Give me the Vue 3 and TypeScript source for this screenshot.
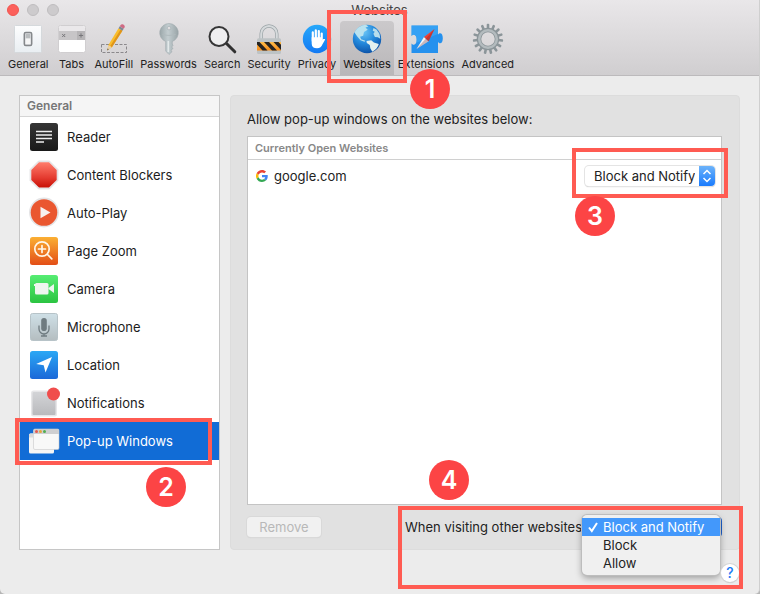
<script setup lang="ts">
import { ref } from 'vue'

type Policy = 'Block and Notify' | 'Block' | 'Allow'

const policies: Policy[] = ['Block and Notify', 'Block', 'Allow']
const tabs = [
  'General', 'Tabs', 'AutoFill', 'Passwords', 'Search',
  'Security', 'Privacy', 'Websites', 'Extensions', 'Advanced',
]
const settings = [
  'Reader', 'Content Blockers', 'Auto-Play', 'Page Zoom', 'Camera',
  'Microphone', 'Location', 'Notifications', 'Pop-up Windows',
]

const activeTab = ref('Websites')
const activeSetting = ref('Pop-up Windows')
const sitePolicy = ref<Policy>('Block and Notify')
const otherPolicy = ref<Policy>('Block and Notify')
const teeth = Array.from({ length: 15 }, (_, i) => i * 24)
</script>

<template>
  <div class="window">
    <header class="toolbar">
      <div class="titlebar">
        <div class="lights">
          <button class="light close" type="button" aria-label="Close"></button>
          <button class="light" type="button" aria-label="Minimize"></button>
          <button class="light" type="button" aria-label="Zoom"></button>
        </div>
        <h1 class="title">{{ activeTab }}</h1>
      </div>
      <nav class="tabs">
        <button
          v-for="tab in tabs"
          :key="tab"
          type="button"
          class="tab"
          :class="{ active: tab === activeTab }"
          @click="activeTab = tab"
        >
          <svg class="tab-icon" viewBox="0 0 32 32" aria-hidden="true">
            <defs>
              <linearGradient id="paper" x1="0" y1="0" x2="0" y2="1">
                <stop offset="0" stop-color="#fdfdfe" /><stop offset="1" stop-color="#e9eef2" />
              </linearGradient>
              <linearGradient id="metal" x1="0" y1="0" x2="1" y2="0">
                <stop offset="0" stop-color="#9aa6a9" /><stop offset=".45" stop-color="#c3cdd0" /><stop offset="1" stop-color="#99a4a7" />
              </linearGradient>
              <linearGradient id="azure" x1="0" y1="0" x2="0" y2="1">
                <stop offset="0" stop-color="#27a8fa" /><stop offset="1" stop-color="#1479f3" />
              </linearGradient>
              <radialGradient id="ocean" cx=".4" cy=".25" r=".8">
                <stop offset="0" stop-color="#69c5f6" /><stop offset=".5" stop-color="#2389dc" /><stop offset="1" stop-color="#0a4da3" />
              </radialGradient>
              <linearGradient id="amber" x1="0" y1="0" x2="0" y2="1">
                <stop offset="0" stop-color="#ffbd4b" /><stop offset="1" stop-color="#f68b18" />
              </linearGradient>
            </defs>
            <g v-if="tab === 'General'">
              <rect x="2.5" y="2.5" width="27" height="27" rx="1" fill="url(#paper)" stroke="#d5d9dc" />
              <rect x="12.300" y="9.500" width="7.400" height="13" rx="1.5" fill="#dfe1e3" stroke="#85888b" stroke-width="1.500" />
              <rect x="13.700" y="11" width="4.600" height="4.500" fill="#babdbf" />
              <rect x="13.700" y="15.500" width="4.600" height="5.500" fill="#f6f6f6" />
            </g>
            <g v-else-if="tab === 'Tabs'">
              <rect x="2.5" y="2.5" width="27" height="27" rx="2" fill="#fff" stroke="#d0ced0" />
              <path d="M3 8V5a2 2 0 0 1 2-2h22a2 2 0 0 1 2 2v3z" fill="#eae8ea" />
              <path d="M3 8h26v9H3z" fill="#c7c5c7" />
              <path d="M21 8h8v9h-8z" fill="#b6b4b6" />
              <path d="m6.200 11 3 3m0-3-3 3M25 10.400v4.200m-2.100-2.100h4.200" stroke="#77767a" fill="none" />
            </g>
            <g v-else-if="tab === 'AutoFill'">
              <path d="M3.500 21.500h25v8h-25z" fill="none" stroke="#8b898c" stroke-dasharray="3 1.500" />
              <path d="m9.300 27.500 1.100-5.500L20.500 5.200l3.900 2.500-10.500 16.600z" fill="#f9bd2c" />
              <path d="m12.300 23 10.300-16.500 1.800 1.200-10.500 16.600z" fill="#e0951a" />
              <path d="m9.300 27.500 1.100-5.500 3.500 2.300z" fill="#e9cfa4" />
              <path d="m9.300 27.500.4-2 1 .7z" fill="#333" />
              <path d="m20.500 5.200 1.300-2 3.900 2.500-1.300 2z" fill="#7d8a95" />
              <path d="m21.800 3.200.8-1.200c1.500-1.700 5 .4 4 2.300l-.9 1.400z" fill="#cf6b83" />
            </g>
            <g v-else-if="tab === 'Passwords'">
              <path fill-rule="evenodd" d="M16 .5a9.300 9.300 0 0 0-3.300 18V28l3.300 3.500 3-2.800-1-1.500 2-1.700-1.300-1.500 1.300-1.500-.7-1.500v-2.500A9.300 9.300 0 0 0 16 .5zm0 2.800a1.800 1.800 0 1 1 0 3.600 1.800 1.800 0 0 1 0-3.600z" fill="url(#metal)" stroke="#97a3a6" stroke-width=".5" />
              <path d="M15.300 18v11" stroke="#e3e9ea" stroke-width="1.600" />
              <path d="M9.500 11.500c4 1.200 9 1.200 13 0" fill="none" stroke="#b0babd" />
            </g>
            <g v-else-if="tab === 'Search'">
              <path d="m20.500 20.500 8.300 8.300" stroke="#303030" stroke-width="3" stroke-linecap="round" />
              <circle cx="13" cy="13.500" r="9.500" fill="#f4f4f5" fill-opacity=".75" stroke="#353536" stroke-width="2" />
            </g>
            <g v-else-if="tab === 'Security'">
              <path d="M8.200 17v-6.200a7.800 7.800 0 0 1 15.600 0V17" fill="none" stroke="#9ba4a7" stroke-width="3.400" />
              <path d="M8.200 17v-6.200a7.800 7.800 0 0 1 15.600 0V17" fill="none" stroke="#d6dadc" stroke-width="2" />
              <rect x="4" y="15.300" width="24" height="15.700" rx="1.500" fill="#bdc3c5" />
              <path d="M4 19h24v8.500H4z" fill="url(#amber)" />
              <path d="M4 19h2.500l8 8.500h-5L4 21.500zM11 19h5l8 8.500h-5zM20.500 19h5l2.500 2.700V27z" fill="#252321" />
            </g>
            <g v-else-if="tab === 'Privacy'">
              <circle cx="16" cy="16" r="14.200" fill="url(#azure)" />
              <path d="M11.800 18V9.300M14.800 15V7.300M17.800 15V8M20.700 17v-6.500" stroke="#fff" stroke-width="2.200" stroke-linecap="round" />
              <path d="M10.700 14.300v6.500c0 3 2 4.500 5.300 4.500 3 0 4.400-1.600 5.500-4l2.700-4.900c-1.400-.9-2.300-.2-3.300 1l-.9.900v-4z" fill="#fff" />
            </g>
            <g v-else-if="tab === 'Websites'">
              <circle cx="16" cy="16" r="14.200" fill="url(#ocean)" />
              <path d="M3.500 9.500C6.200 4.200 10.500 2 15 1.800l2.400 1.700-2.900 1.100 2.200 2.200-3.700 2.200-.8 3.700-3.100 1.100 1.100 2.500 4 1.500-.7.900-4-1.400-3.400-4z" fill="#b9e2ef" />
              <path d="m15.500 18 4.700-.7 2.700 2.200 4.900 1.500c-.8 3.300-3.200 6.100-6.500 7.800l-2-3.500-.5-3.300-3-1.900z" fill="#e4f1ef" />
              <path d="m22.500 5 3 1.600 3 4.100.8 5-2.500-1.500-2.900-.3-1.500-3.200 1.300-2-2-1z" fill="#b7ddec" />
            </g>
            <g v-else-if="tab === 'Extensions'">
              <path d="M1.500 2.500h26.500v9c.8-.9 1.300-1.200 2-1.200 1.800 0 2.800 1.900 2.800 5s-1 5-2.800 5c-.7 0-1.200-.3-2-1.200V30H1.500V20.500c.8.900 1.500 1.200 2.300 1.200 1.900 0 2.800-2.200 2.800-5s-.9-5-2.800-5c-.8 0-1.500.5-2.300 1.300z" fill="#2591ee" />
              <path d="M1.500 2.500h26.500V11L6 20c1-2.500.8-7-1-8-1.200-.7-2.500-.2-3.500 1z" fill="#45b2f9" opacity=".5" />
              <path d="m6.500 26 7.500-12 4.600 4.200z" fill="#f5f7f9" />
              <path d="M24.500 6 18.600 18.200 14 14z" fill="#f04035" />
              <path d="M24.500 6 6.500 26l12.100-7.800z" fill="#60202e" opacity=".3" />
            </g>
            <g v-else>
              <rect v-for="a in teeth" :key="a" x="14.700" y=".8" width="2.600" height="6" rx="1" fill="#8b9599" :transform="`rotate(${a} 16 16)`" />
              <circle cx="16" cy="16" r="9" fill="none" stroke="#8b9599" stroke-width="4.500" />
              <circle cx="16" cy="16" r="8.800" fill="none" stroke="#b3bbbe" stroke-width="2.500" />
            </g>
          </svg>
          <span>{{ tab }}</span>
        </button>
      </nav>
    </header>

    <main class="body">
      <aside class="sidebar">
        <h2 class="side-head">General</h2>
        <ul class="side-list">
          <li v-for="item in settings" :key="item">
            <button
              type="button"
              class="side-item"
              :class="{ selected: item === activeSetting }"
              @click="activeSetting = item"
            >
              <svg class="side-icon" viewBox="0 0 32 32" aria-hidden="true">
                <defs>
                  <linearGradient id="dark" x1="0" y1="0" x2="0" y2="1"><stop offset="0" stop-color="#353535" /><stop offset="1" stop-color="#191919" /></linearGradient>
                  <linearGradient id="red" x1="0" y1="0" x2="0" y2="1"><stop offset="0" stop-color="#ff7d6c" /><stop offset=".6" stop-color="#e53c31" /><stop offset="1" stop-color="#c80f05" /></linearGradient>
                  <linearGradient id="orange" x1="0" y1="0" x2="0" y2="1"><stop offset="0" stop-color="#fbb033" /><stop offset="1" stop-color="#e34e17" /></linearGradient>
                  <linearGradient id="green" x1="0" y1="0" x2="0" y2="1"><stop offset="0" stop-color="#56ed73" /><stop offset="1" stop-color="#2bc441" /></linearGradient>
                  <linearGradient id="steel" x1="0" y1="0" x2="0" y2="1"><stop offset="0" stop-color="#cfe0e7" /><stop offset="1" stop-color="#b4bdc0" /></linearGradient>
                  <linearGradient id="blue" x1="0" y1="0" x2="0" y2="1"><stop offset="0" stop-color="#2ba8f5" /><stop offset="1" stop-color="#1b68d8" /></linearGradient>
                  <linearGradient id="gray" x1="0" y1="0" x2="0" y2="1"><stop offset="0" stop-color="#d3d4d7" /><stop offset="1" stop-color="#b9babd" /></linearGradient>
                </defs>
                <g v-if="item === 'Reader'">
                  <rect x="2" y="2" width="28" height="28" rx="2.500" fill="url(#dark)" />
                  <path d="M8 10.500h16M8 14h16M8 17.500h16M8 21h8" stroke="#eee" stroke-width="1.700" />
                </g>
                <g v-else-if="item === 'Content Blockers'">
                  <path d="M10.500 2h11L30 10.500v11L21.500 30h-11L2 21.500v-11z" fill="#e9e9eb" stroke="#d8d8da" stroke-width=".6" />
                  <path d="M11 3.200h10l7.700 7.700v10L21 28.600H11l-7.700-7.700v-10z" fill="url(#red)" />
                </g>
                <g v-else-if="item === 'Auto-Play'">
                  <circle cx="16" cy="15.500" r="15" fill="#e4e4e6" />
                  <circle cx="16" cy="15.500" r="13.300" fill="#ea5730" />
                  <path d="M12.500 9.800 22.500 15.500l-10 5.700z" fill="#f7f1ef" />
                </g>
                <g v-else-if="item === 'Page Zoom'">
                  <rect x="2" y="2" width="28" height="28" rx="2.500" fill="url(#orange)" />
                  <g fill="none" stroke="#fff6e8" stroke-width="1.700" stroke-linecap="round"><circle cx="14" cy="14" r="7.200" /><path d="m19.500 19.500 4.300 4.300M14 10.500v7M10.500 14h7" /></g>
                </g>
                <g v-else-if="item === 'Camera'">
                  <rect x="2" y="2" width="28" height="28" rx="2.500" fill="url(#green)" />
                  <rect x="7" y="10" width="13.500" height="11.500" rx="1.500" fill="#eef5ef" />
                  <path d="M6 11h3v2H6zM20.500 15l5.500-4v9l-5.500-4z" fill="#eef5ef" />
                </g>
                <g v-else-if="item === 'Microphone'">
                  <rect x="2.500" y="2.500" width="27" height="27" rx="2" fill="url(#steel)" stroke="#b7c3c8" />
                  <rect x="13.200" y="7" width="5.600" height="13" rx="2.800" fill="#6f7b80" />
                  <path d="M11 14.500v3.500a5 5 0 0 0 10 0v-3.500M16 23v2M13 25h6" fill="none" stroke="#6f7b80" stroke-width="1.300" />
                </g>
                <g v-else-if="item === 'Location'">
                  <rect x="2" y="2" width="28" height="28" rx="2.500" fill="url(#blue)" />
                  <path d="M24 8 17.500 23.500l-1.800-7.200L8.200 15z" fill="#fff" />
                </g>
                <g v-else-if="item === 'Notifications'">
                  <rect x="3" y="3.500" width="26" height="26" rx="2.500" fill="#e6e6e8" />
                  <rect x="4.500" y="5" width="23" height="23" rx="1" fill="url(#gray)" />
                  <circle cx="25.500" cy="7" r="6.500" fill="#f04d4c" />
                </g>
                <g v-else>
                  <rect x="1" y="8.500" width="25" height="20" rx="1.500" fill="#f5f5f5" />
                  <path d="M1 10a1.500 1.500 0 0 1 1.500-1.500H5v4H1z" fill="#dadada" />
                  <rect x="5.500" y="4" width="25.500" height="20.500" rx="1.500" fill="#f8f8f8" stroke="#c9c9cb" stroke-width=".6" />
                  <path d="M5.500 9V5.500A1.500 1.500 0 0 1 7 4h22.500A1.500 1.500 0 0 1 31 5.500V9z" fill="#cfcfd1" />
                  <circle cx="8.500" cy="6.500" r="1.500" fill="#e75a50" /><circle cx="12.500" cy="6.500" r="1.500" fill="#e5a53b" /><circle cx="16.500" cy="6.500" r="1.500" fill="#51ad50" />
                </g>
              </svg>
              <span>{{ item }}</span>
            </button>
          </li>
        </ul>
      </aside>

      <section class="pane">
        <p class="intro">Allow pop-up windows on the websites below:</p>
        <div class="sites">
          <h3 class="sites-head">Currently Open Websites</h3>
          <div class="site">
            <svg class="favicon" viewBox="0 0 48 48" aria-hidden="true">
              <path fill="#ea4335" d="M24 9.500c3.500 0 6.700 1.200 9.200 3.600l6.900-6.900C35.900 2.400 30.500 0 24 0 14.600 0 6.500 5.400 2.600 13.200l8 6.200C12.400 13.700 17.700 9.500 24 9.500z" />
              <path fill="#4285f4" d="M47 24.600c0-1.600-.2-3.100-.4-4.600H24v9h12.900c-.6 3-2.200 5.500-4.700 7.200l7.700 6C44.400 38 47 31.800 47 24.600z" />
              <path fill="#fbbc05" d="M10.500 28.600a14.500 14.500 0 0 1 0-9.200l-8-6.200a24 24 0 0 0 0 21.600z" />
              <path fill="#34a853" d="M24 48c6.500 0 11.900-2.100 15.900-5.800l-7.700-6C30 37.700 27.200 38.500 24 38.500c-6.300 0-11.600-4.200-13.500-9.900l-8 6.200C6.500 42.600 14.600 48 24 48z" />
            </svg>
            <label class="site-name" for="site-policy">google.com</label>
            <div class="popup">
              <select id="site-policy" v-model="sitePolicy">
                <option v-for="p in policies" :key="p">{{ p }}</option>
              </select>
              <svg class="arrows" viewBox="0 0 16 20" aria-hidden="true"><path d="m4.500 8 3.500-3.500L11.500 8M4.500 12l3.500 3.500 3.500-3.500" /></svg>
            </div>
          </div>
        </div>
        <div class="footer">
          <button class="remove" type="button" disabled>Remove</button>
          <div class="other">
            <label for="other-policy">When visiting other websites</label>
            <div class="popup open">
              <select id="other-policy" v-model="otherPolicy">
                <option v-for="p in policies" :key="p">{{ p }}</option>
              </select>
              <div class="menu" role="listbox" aria-label="When visiting other websites">
                <button
                  v-for="p in policies"
                  :key="p"
                  type="button"
                  role="option"
                  class="choice"
                  :class="{ chosen: p === otherPolicy }"
                  :aria-selected="p === otherPolicy"
                  @click="otherPolicy = p"
                >
                  <svg class="check" viewBox="0 0 12 12" aria-hidden="true"><path v-if="p === otherPolicy" d="m2 6.500 2.800 3.500L10 2" /></svg>
                  <span>{{ p }}</span>
                </button>
              </div>
            </div>
          </div>
        </div>
      </section>
    </main>

    <button class="help" type="button" aria-label="Help">?</button>

    <div class="frame frame-1"></div><span class="step step-1">1</span>
    <div class="frame frame-2"></div><span class="step step-2">2</span>
    <div class="frame frame-3"></div><span class="step step-3">3</span>
    <div class="frame frame-4"></div><span class="step step-4">4</span>
  </div>
</template>

<style>
body {
  background: #b5b5b5;
}
</style>

<style scoped>
* {
  box-sizing: border-box;
}
.window {
  position: relative;
  display: flex;
  flex-direction: column;
  min-height: 100vh;
  background: #ececec;
  border-right: 1px solid #cfcfcf;
  border-radius: 0 0 5px 5px;
  color: #222;
  font: 13px/16px Inter, "Liberation Sans", sans-serif;
}
button,
select {
  margin: 0;
  padding: 0;
  border: 0;
  background: none;
  color: inherit;
  font: inherit;
}
h1,
h2,
h3,
p,
ul {
  margin: 0;
  padding: 0;
  font-size: inherit;
  list-style: none;
}
.toolbar {
  height: 76px;
  background: linear-gradient(#e9e7e9, #d0ced0);
  border-bottom: 1px solid #bcbabc;
}
.titlebar {
  display: grid;
  grid-template-columns: 1fr auto 1fr;
  align-items: center;
  height: 20px;
  padding: 0 7px;
}
.lights {
  display: flex;
  gap: 8px;
}
.light {
  width: 12px;
  height: 12px;
  border: 1px solid #bfbdbf;
  border-radius: 50%;
  background: #cdcbcd;
}
.close {
  border-color: #f15550;
  background: #fc605b;
}
.title {
  font-weight: 400;
  color: #444;
}
.tabs {
  display: flex;
  gap: 1px;
  height: 55px;
  padding: 1px 0 0 5px;
}
.tab {
  display: flex;
  flex-direction: column;
  align-items: center;
  gap: 1px;
  min-width: 38px;
  padding: 2px 3px 0;
  font-size: 11px;
  line-height: 16px;
  border-radius: 4px 4px 0 0;
}
.tab.active {
  background: linear-gradient(#cbc9cb, #b9b7b9);
  color: #111;
}
.tab-icon {
  width: 32px;
  height: 32px;
  overflow: visible;
}
.body {
  display: flex;
  flex: 1;
  gap: 10px;
  padding: 19px 19px 44px;
}
.sidebar {
  flex: 0 0 201px;
  border: 1px solid #c6c6c6;
  background: #fff;
}
.side-head {
  height: 21px;
  padding-left: 7px;
  border-bottom: 1px solid #d5d5d5;
  background: #f5f5f5;
  color: #777;
  font-size: 12px;
  font-weight: 600;
  line-height: 20px;
}
.side-list {
  padding-top: 1px;
}
.side-item {
  display: flex;
  align-items: center;
  gap: 7px;
  width: 100%;
  height: 38px;
  padding-left: 8px;
  text-align: left;
  color: #1c1c1c;
}
.side-item.selected {
  background: #116cd6;
  color: #fff;
}
.side-icon {
  width: 32px;
  height: 32px;
}
.pane {
  display: flex;
  flex: 1;
  flex-direction: column;
  min-width: 0;
  padding: 15px 17px 12px 16px;
  border: 1px solid #dcdcdc;
  border-radius: 4px;
  background: #e1e1e1;
}
.intro {
  margin-bottom: 9px;
}
.sites {
  flex: 1;
  border: 1px solid #c4c4c4;
  background: #fff;
}
.sites-head {
  height: 23px;
  padding-left: 7px;
  border-bottom: 1px solid #d0d0d0;
  color: #888;
  font-size: 11px;
  font-weight: 600;
  line-height: 23px;
}
.site {
  display: flex;
  align-items: center;
  gap: 6px;
  height: 32px;
  padding: 0 6px 0 8px;
}
.favicon {
  width: 12px;
  height: 12px;
}
.site-name {
  flex: 1;
}
.popup {
  position: relative;
  flex: none;
}
.popup select {
  display: block;
  width: 130px;
  height: 20px;
  padding: 0 20px 0 9px;
  border-radius: 4px;
  background: #fff;
  box-shadow: 0 0 0 1px #e4e4e4, 0 1px 1px #bbb;
  appearance: none;
}
.arrows {
  position: absolute;
  top: 0;
  right: 0;
  width: 16px;
  height: 20px;
  border-radius: 0 4px 4px 0;
  background: linear-gradient(#6cb3fa, #1a7bfd);
  fill: none;
  stroke: #fff;
  stroke-width: 1.5;
  pointer-events: none;
}
.footer {
  display: flex;
  align-items: center;
  justify-content: space-between;
  margin-top: 12px;
}
.remove {
  width: 74px;
  height: 20px;
  border-radius: 4px;
  background: #f1f1f1;
  box-shadow: 0 0 0 1px #d9d9d9, 0 1px 1px #ccc;
  color: #b8b8b8;
}
.other {
  display: flex;
  align-items: center;
}
.popup.open select {
  width: 140px;
  background: #1c5fcb;
  box-shadow: none;
  color: transparent;
}
.menu {
  position: absolute;
  top: -2px;
  right: 2px;
  width: 138px;
  padding: 3px 0;
  border-radius: 5px;
  background: #f0f0f0;
  box-shadow: 0 0 0 1px #bdbdbd, 0 3px 7px rgba(0, 0, 0, 0.35);
}
.choice {
  display: flex;
  align-items: center;
  gap: 4px;
  width: 100%;
  height: 18px;
  padding-left: 5px;
}
.choice.chosen {
  background: #4398fb;
  color: #fff;
}
.check {
  width: 12px;
  height: 12px;
  fill: none;
  stroke: #fff;
  stroke-width: 2;
}
.help {
  position: absolute;
  right: 20px;
  bottom: 12px;
  width: 18px;
  height: 18px;
  border-radius: 50%;
  background: #fff;
  box-shadow: 0 0 0 1px #d4d4d4, 0 1px 1px #bbb;
  color: #1a7bf5;
  font-size: 14px;
  font-weight: 500;
  line-height: 18px;
}
.frame {
  position: absolute;
  border: 4px solid #ff5b52;
  pointer-events: none;
}
.step {
  position: absolute;
  width: 40px;
  height: 40px;
  border-radius: 50%;
  background: #fc4445;
  color: #fff;
  font-size: 25px;
  font-weight: 600;
  line-height: 40px;
  text-align: center;
}
.frame-1 {
  top: 10px;
  left: 327px;
  width: 80px;
  height: 73px;
}
.step-1 {
  top: 69px;
  left: 410px;
}
.frame-2 {
  top: 418px;
  left: 15px;
  width: 197px;
  height: 47px;
}
.step-2 {
  top: 467px;
  left: 146px;
}
.frame-3 {
  top: 148px;
  right: 31px;
  width: 156px;
  height: 50px;
}
.step-3 {
  top: 196px;
  right: 144px;
}
.frame-4 {
  right: 16px;
  bottom: 5px;
  width: 345px;
  height: 83px;
}
.step-4 {
  right: 290px;
  bottom: 94px;
}
</style>
